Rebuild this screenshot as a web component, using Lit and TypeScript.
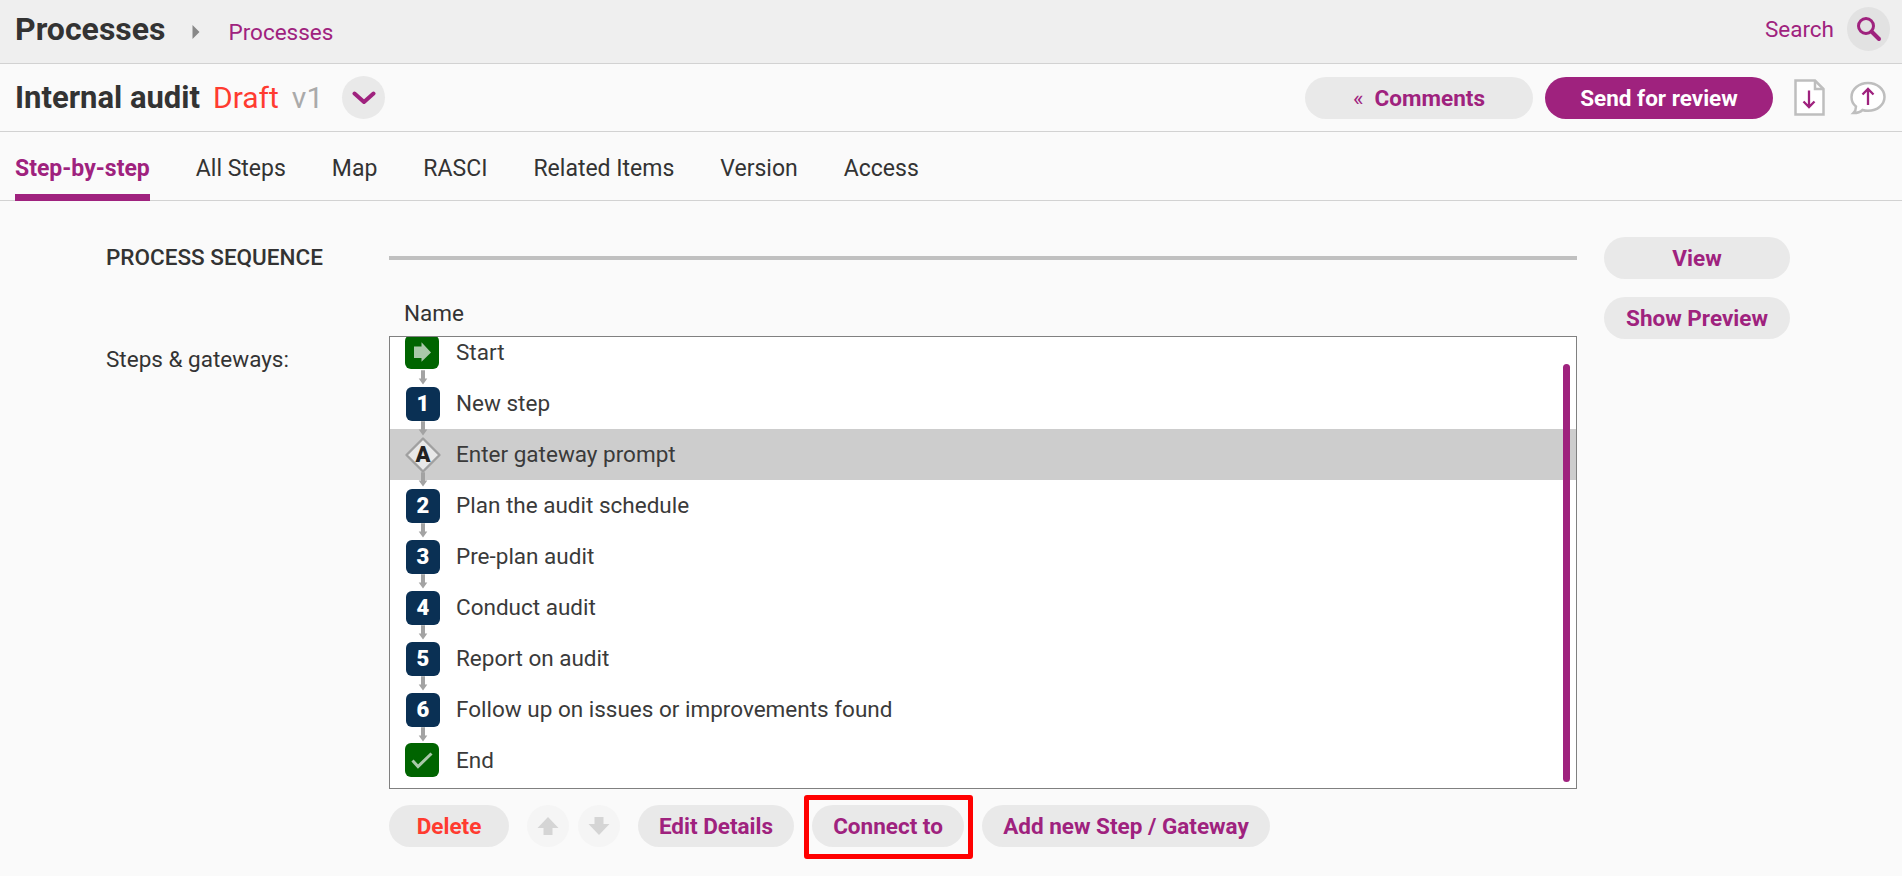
import { LitElement, html, css, svg } from "lit";
import { customElement, property } from "lit/decorators.js";

type Kind = "start" | "step" | "gateway" | "end";
interface Step { kind: Kind; label: string; mark?: string; }

const STEPS: Step[] = [
  { kind: "start", label: "Start" },
  { kind: "step", mark: "1", label: "New step" },
  { kind: "gateway", mark: "A", label: "Enter gateway prompt" },
  { kind: "step", mark: "2", label: "Plan the audit schedule" },
  { kind: "step", mark: "3", label: "Pre-plan audit" },
  { kind: "step", mark: "4", label: "Conduct audit" },
  { kind: "step", mark: "5", label: "Report on audit" },
  { kind: "step", mark: "6", label: "Follow up on issues or improvements found" },
  { kind: "end", label: "End" },
];

const TABS = ["Step-by-step", "All Steps", "Map", "RASCI", "Related Items", "Version", "Access"];

@customElement("step-row")
export class StepRow extends LitElement {
  @property({ attribute: false }) step!: Step;
  @property({ type: Boolean }) first = false;
  @property({ type: Boolean }) last = false;

  static styles = css`
    :host { display: flex; height: 51px; flex: none; }
    .row { display: flex; flex: 1; align-items: center; }
    .row.selected { background: #cdcdcd; }
    .icon { display: block; width: 66px; height: 51px; flex: none; overflow: visible; }
    .label { font-size: 22.5px; line-height: 51px; color: #3a3a3a; padding-bottom: 1px; }
    .mark { font: 900 22px Roboto, sans-serif; text-anchor: middle; fill: #fff; }
    .mark.dark { fill: #222; }
  `;

  render() {
    const { kind, mark, label } = this.step;
    return html`<div class="row ${kind === "gateway" ? "selected" : ""}">
      <svg class="icon" viewBox="0 0 66 51">
        ${this.first ? "" : svg`<path d="M31 -7.5h4V0.5h2.3L33 6.5 28.7 0.5H31z" fill="#a3a3a3"/>`}
        ${kind === "start" ? svg`<rect x="15" y="8" width="34" height="34" rx="6" fill="#006400"/>
          <path d="M24 19.5h7.5V15.200L41 25.500 31.500 34.800V31H24z" fill="#a9c8a9"/>` : ""}
        ${kind === "end" ? svg`<rect x="15" y="8" width="34" height="34" rx="6" fill="#006400"/>
          <path d="M22.500 25.500L28 31.500 41.500 18.500" fill="none" stroke="#a9c8a9" stroke-width="3"/>` : ""}
        ${kind === "step" ? svg`<rect x="16" y="9" width="34" height="34" rx="6" fill="#0a3054"/>
          <text class="mark" x="33" y="33">${mark}</text>` : ""}
        ${kind === "gateway" ? svg`<path d="M33 9.500L49.500 26 33 42.500 16.500 26z" fill="#e8e8e8" stroke="#a0a0a0" stroke-width="2.400" stroke-linejoin="round"/>
          <text class="mark dark" x="33" y="32.500">${mark}</text>` : ""}
        ${this.last ? "" : svg`<path d="M31 43.500h4V51H31z" fill="#a3a3a3"/>`}
      </svg>
      <span class="label">${label}</span>
    </div>`;
  }
}

@customElement("app-root")
export class AppRoot extends LitElement {
  static styles = css`
    :host { display: block; height: 876px; background: #fafafa; color: #333; overflow: hidden;
      font-family: Roboto, sans-serif; font-size: 22.5px; line-height: 26px; }
    * { box-sizing: border-box; }
    svg { display: block; flex: none; }
    .top { display: flex; align-items: center; height: 64px; padding: 0 12px 0 15px; background: #efefef; border-bottom: 1px solid #d2d2d2; }
    .brand { font-size: 32px; font-weight: 700; padding-bottom: 5px; }
    .caret { margin: 0 28px 0 27px; }
    .link { color: #9f227e; }
    .spacer { flex: 1; }
    .search { color: #9f227e; margin-right: 13px; padding-bottom: 6px; }
    .round { display: flex; align-items: center; justify-content: center; border-radius: 50%; background: #e9e9e9; flex: none; }
    .search-btn { width: 43px; height: 44px; background: #e2e2e2; margin-bottom: 5px; }
    .title-bar { display: flex; align-items: center; height: 68px; padding: 0 16px 0 15px; border-bottom: 1px solid #d2d2d2; }
    .title { font-size: 31px; font-weight: 700; }
    .draft { font-size: 30px; color: #ff3b30; margin-left: 13px; }
    .ver { font-size: 30px; color: #aaa; margin-left: 13px; }
    .drop { width: 43px; height: 43px; margin-left: 19px; }
    .pill { display: flex; align-items: center; justify-content: center; height: 42px; border-radius: 21px;
      background: #e9e9e9; color: #9f227e; font-weight: 700; white-space: nowrap; flex: none; }
    .wide { width: 228px; margin-right: 12px; }
    .primary { background: #9f227e; color: #fff; }
    .chev { font-weight: 400; margin-right: 11px; }
    .doc { margin-left: 9px; }
    .bubble { margin-left: 25px; }
    .tabs { display: flex; height: 69px; padding-left: 15px; gap: 46px; border-bottom: 1px solid #d2d2d2; font-size: 23px; }
    .tab { padding-top: 24px; height: 69px; }
    .tab.active { color: #9f227e; font-weight: 700; border-bottom: 7px solid #9f227e; }
    .main { display: grid; grid-template-columns: 283px 1188px 186px; padding: 36px 0 0 106px; }
    .labels { display: flex; flex-direction: column; }
    .section { font-weight: 500; padding-top: 7px; height: 109px; }
    .content { display: flex; flex-direction: column; }
    .rule { height: 4px; background: #c0c0c0; margin-top: 19px; }
    .name { padding: 40px 0 0 15px; height: 76px; }
    .list { display: flex; height: 453px; background: #fff; border: 1px solid #808080; overflow: hidden; position: relative; }
    .rows { display: flex; flex-direction: column; flex: 1; margin-top: -10px; }
    .thumb { position: absolute; right: 6px; top: 27px; width: 7px; height: 418px; border-radius: 4px; background: #9f227e; }
    .actions { display: flex; margin-top: 16px; gap: 18px; }
    .delete { width: 120px; color: #ff3b30; }
    .move { width: 42px; height: 42px; background: #f5f5f5; }
    .move-down { margin-left: -9px; }
    .edit { width: 156px; }
    .connect { width: 152px; position: relative; }
    .frame { position: absolute; left: -8px; top: -10px; width: 169px; height: 64px; border: 5px solid #f00; border-radius: 3px; }
    .add { width: 288px; }
    .side { display: flex; flex-direction: column; gap: 18px; margin-left: 27px; width: 186px; }
  `;

  render() {
    return html`
      <header class="top">
        <span class="brand">Processes</span>
        <svg class="caret" width="8" height="14" viewBox="0 0 8 14"><path d="M0.500 0L7.500 7 0.500 14z" fill="#888"/></svg>
        <span class="link">Processes</span>
        <span class="spacer"></span>
        <span class="search">Search</span>
        <span class="round search-btn"><svg width="26" height="26" viewBox="0 0 26 26" fill="none" stroke="#9f227e">
          <circle cx="10" cy="10" r="7.500" stroke-width="3"/><path d="M15.500 15.500L23 23" stroke-width="4" stroke-linecap="round"/></svg></span>
      </header>
      <section class="title-bar">
        <span class="title">Internal audit</span><span class="draft">Draft</span><span class="ver">v1</span>
        <span class="round drop"><svg width="24" height="14" viewBox="0 0 24 14"><path d="M2.500 2.500L12 11 21.500 2.500" fill="none" stroke="#9f227e" stroke-width="4" stroke-linecap="round" stroke-linejoin="round"/></svg></span>
        <span class="spacer"></span>
        <span class="pill wide"><span class="chev">«</span>Comments</span>
        <span class="pill wide primary">Send for review</span>
        <svg class="doc" width="31" height="37" viewBox="0 0 31 37"><path d="M1.500 1.500H21L29.500 10V35.500H1.500z" fill="#fff" stroke="#bebebe" stroke-width="2.500"/><path d="M21 1.500V10H29.500" fill="none" stroke="#bebebe" stroke-width="2.500"/><path d="M15 11.500V28M9.500 22.500L15 28 20.500 22.500" fill="none" stroke="#9f227e" stroke-width="2.300"/></svg>
        <svg class="bubble" width="36" height="34" viewBox="0 0 36 34"><path d="M18 2C9 2 1.500 8 1.500 16C1.500 20 3.500 23.500 6 25.500C6 28 5 30.500 3.500 32C7 32 10.500 31 12.500 29C14 29.500 16 29.800 18 29.800C27.500 29.800 34.500 23.500 34.500 16C34.500 8 27 2 18 2z" fill="#fff" stroke="#bebebe" stroke-width="2.500"/><path d="M18 24V8M12.500 13.500L18 8 23.500 13.500" fill="none" stroke="#9f227e" stroke-width="2.300"/></svg>
      </section>
      <nav class="tabs">${TABS.map((t, i) => html`<span class="tab ${i === 0 ? "active" : ""}">${t}</span>`)}</nav>
      <main class="main">
        <div class="labels"><span class="section">PROCESS SEQUENCE</span><span>Steps &amp; gateways:</span></div>
        <div class="content">
          <div class="rule"></div>
          <div class="name">Name</div>
          <div class="list">
            <div class="rows">${STEPS.map((s, i) => html`<step-row .step=${s} ?first=${i === 0} ?last=${i === STEPS.length - 1}></step-row>`)}</div>
            <div class="thumb"></div>
          </div>
          <div class="actions">
            <span class="pill delete">Delete</span>
            <span class="round move"><svg width="22" height="18" viewBox="0 0 22 18"><path d="M11 0L21.500 11H15.500V18H6.500V11H0.500z" fill="#d5d5d5"/></svg></span>
            <span class="round move move-down"><svg width="22" height="18" viewBox="0 0 22 18"><path d="M11 18L21.500 7H15.500V0H6.500V7H0.500z" fill="#d5d5d5"/></svg></span>
            <span class="pill edit">Edit Details</span>
            <span class="pill connect">Connect to<span class="frame"></span></span>
            <span class="pill add">Add new Step / Gateway</span>
          </div>
        </div>
        <div class="side"><span class="pill">View</span><span class="pill">Show Preview</span></div>
      </main>`;
  }
}
